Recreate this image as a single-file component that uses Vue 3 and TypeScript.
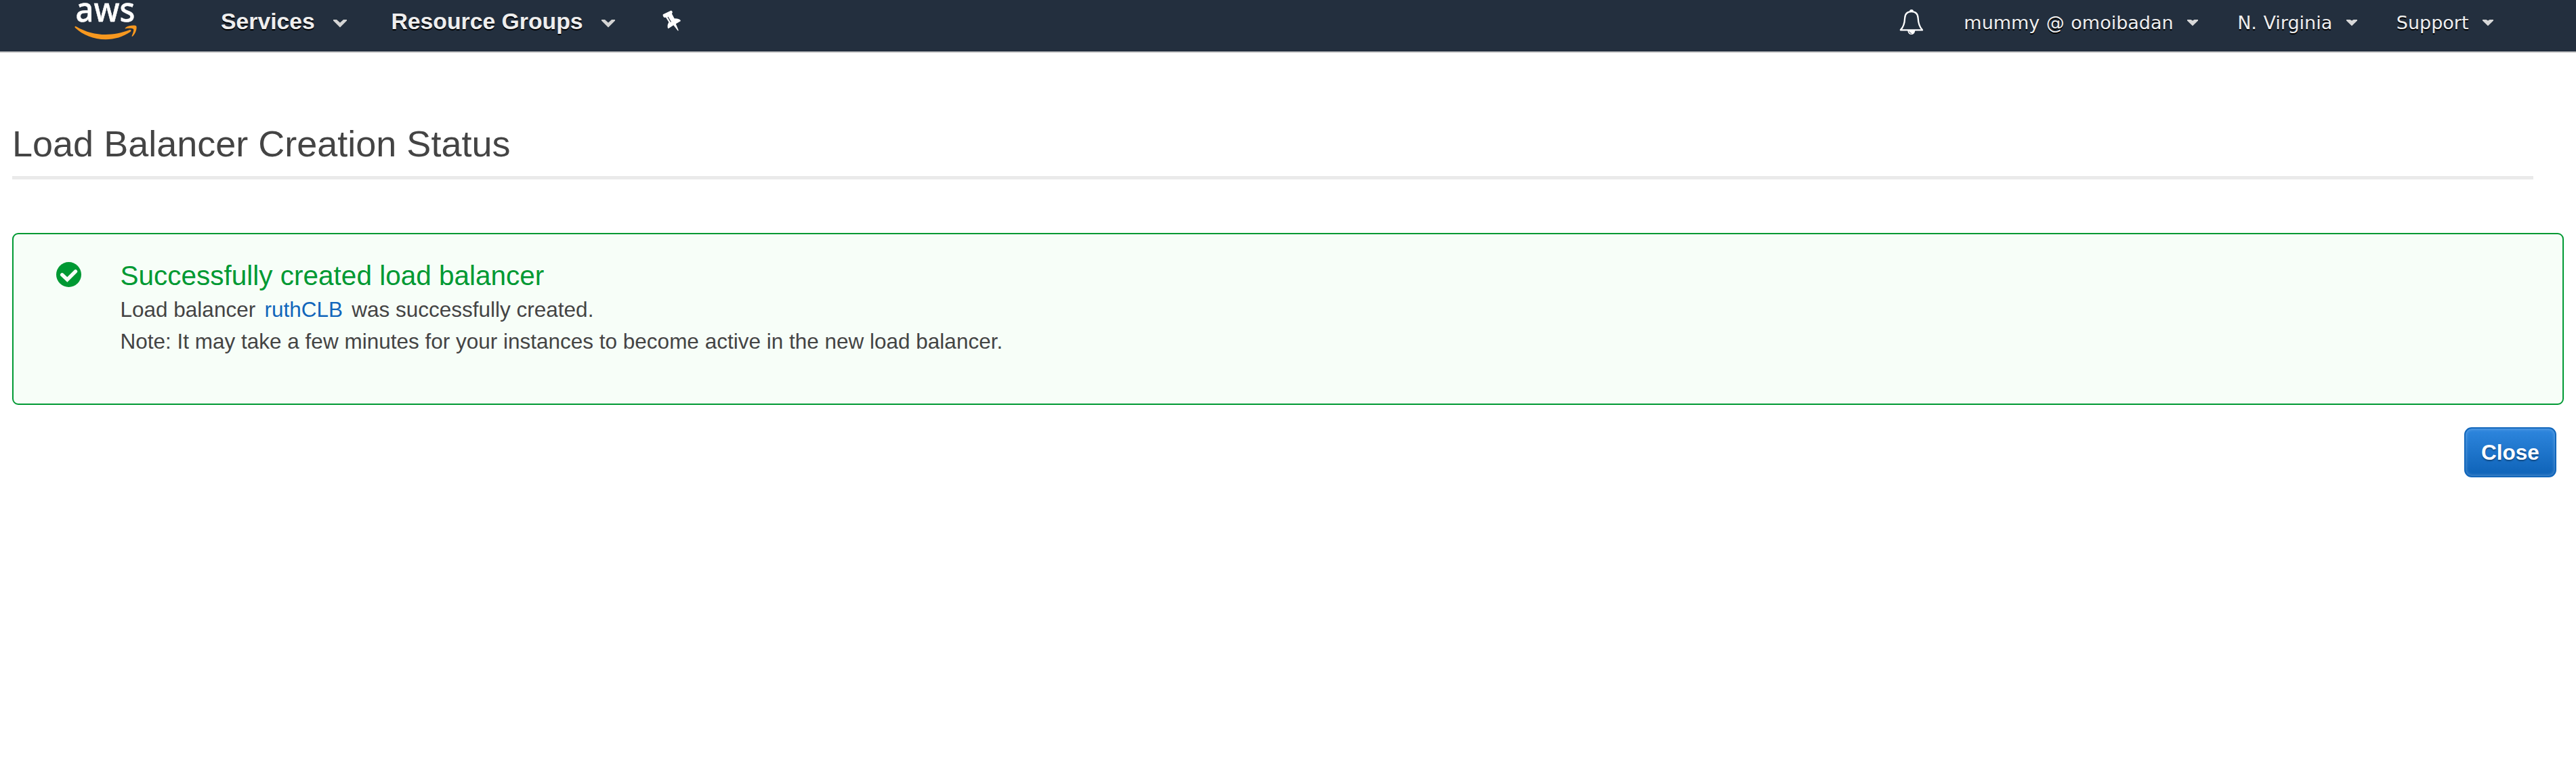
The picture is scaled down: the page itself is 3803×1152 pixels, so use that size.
<script setup lang="ts">
interface MenuItem {
  label: string
  key: string
}

const services: MenuItem[] = [
  { label: 'Services', key: 'services' },
  { label: 'Resource Groups', key: 'groups' },
]

const account: MenuItem[] = [
  { label: 'mummy @ omoibadan', key: 'user' },
  { label: 'N. Virginia', key: 'region' },
  { label: 'Support', key: 'support' },
]

const balancer = 'ruthCLB'
</script>

<template>
  <div class="page">
    <header class="nav">
      <svg class="logo" width="94" height="64" viewBox="0 0 94 64" aria-label="aws">
        <text x="1.5" y="31.6" textLength="88" lengthAdjust="spacingAndGlyphs">aws</text>
        <path
          d="M0.500 39.500Q1 38.300 2.600 39.200C17 47.500 31 51 46 51C58 51 70 48.500 81 44.300C83.600 43.300 84.500 45.600 82.500 47.100C72 54.500 59 58.300 46 58.300C28 58.300 12 51.500 1 41Q0.200 40.200 0.500 39.500Z"
          fill="#f7981f"
        />
        <path
          d="M75.500 42.200C74.500 42.500 74.300 41.700 75.200 40.900C79.500 37.500 90 36.700 91.300 38.700C92.500 41 90.500 49.500 86 53.500C85 54.400 84.200 53.900 84.700 52.800C86 49.700 88 44.500 87 43C85.800 41.400 79.500 41.700 75.500 42.200Z"
          fill="#f7981f"
        />
      </svg>

      <nav class="left">
        <a v-for="item in services" :key="item.key" :class="['main', item.key]">
          <span>{{ item.label }}</span>
          <svg width="20" height="12" viewBox="0 0 20 12">
            <path d="M0 0H5L10 4.500L15 0H20V1.500L10 11.500L0 1.500Z" fill="#d4d4d4" />
          </svg>
        </a>
        <svg class="pin" width="28" height="32" viewBox="0 0 28 32">
          <path
            d="M0.800 6.200L12.800 0.400Q14.800 0.800 14.800 3.500L13.900 5.200L17.600 12.300Q26 12.200 27 16L19.800 20.200L23.800 30L22.800 30.600L16.300 22.300L8.600 27.300Q6 24 9.300 17.700L5 10.700L2.800 10.900Q0 9 0.800 6.200Z"
            fill="#fff"
          />
          <path d="M8 10L12.500 17.500" stroke="#232f3e" stroke-width="1.200" fill="none" />
        </svg>
      </nav>

      <nav class="right">
        <svg class="bell" width="36" height="40" viewBox="0 0 36 40">
          <path d="M15 4a3 3 0 0 1 6 0z" fill="#fff" />
          <path
            d="M1.800 31.300C6.500 26.500 7.800 22 8.100 14C8.400 7.500 12 4.200 18 4.200S27.400 7.500 27.700 14C28 22 29.500 26.500 34 31.300Z"
            fill="none"
            stroke="#fff"
            stroke-width="2.300"
            stroke-linejoin="round"
          />
          <path d="M12.200 32H23.400Q22.500 38 17.800 38T12.200 32Z" fill="#fff" />
          <path d="M14.500 33.500Q15 36 18 36.500" fill="none" stroke="#232f3e" stroke-width="0.900" />
        </svg>
        <a v-for="item in account" :key="item.key" :class="['sub', item.key]">
          <span>{{ item.label }}</span>
          <svg width="16" height="10" viewBox="0 0 16 10">
            <path d="M0 0H5.500L8 1.500L10.500 0H16V1.500L8 9.200L0 1.500Z" fill="#d8d8d8" />
          </svg>
        </a>
      </nav>
    </header>

    <main>
      <h1>Load Balancer Creation Status</h1>

      <section class="alert">
        <svg class="check" width="38" height="38" viewBox="0 0 38 38">
          <circle cx="18.500" cy="18.500" r="18.500" fill="#093" />
          <path
            d="M8.700 18.800L16.300 26L28.500 13.800"
            fill="none"
            stroke="#f7fef8"
            stroke-width="5.400"
            stroke-linejoin="miter"
            stroke-linecap="round"
          />
        </svg>
        <div>
          <h2>Successfully created load balancer</h2>
          <p>Load balancer <a class="link">{{ balancer }}</a> was successfully created.</p>
          <p>Note: It may take a few minutes for your instances to become active in the new load balancer.</p>
        </div>
      </section>

      <div class="actions">
        <button type="button">Close</button>
      </div>
    </main>
  </div>
</template>

<style>
body {
  margin: 0;
  background: #fff;
}
</style>

<style scoped>
.page {
  min-height: 1152px;
  background: #fff;
  color: #444;
  font-family: "Liberation Sans", Arial, sans-serif;
}

.nav {
  box-sizing: border-box;
  height: 78px;
  display: flex;
  align-items: flex-start;
  background: #232f3e;
  border-bottom: 2px solid #ccc;
}

svg {
  display: block;
  flex: none;
}

.logo {
  margin-left: 110px;
}

.logo text {
  font-family: "Noto Sans", sans-serif;
  font-size: 51px;
  font-weight: 500;
  fill: #fff;
  stroke: #fff;
  stroke-width: 0.5px;
}

.left,
.right {
  display: flex;
  align-items: flex-start;
}

.left {
  margin-left: 122px;
}

.main,
.sub {
  display: flex;
  white-space: nowrap;
  color: #eee;
  text-shadow: 0 2px 0 #000;
}

.main {
  font-size: 33.75px;
  line-height: 40px;
  font-weight: 700;
  padding-top: 11px;
}

.main svg {
  margin: 18px 0 0 27.5px;
}

.main.groups {
  margin-left: 65px;
}

.pin {
  margin: 15px 0 0 70px;
}

.right {
  margin-left: auto;
  padding-right: 122px;
}

.bell {
  margin: 13px 59px 0 0;
}

.sub {
  font-family: "DejaVu Sans", Verdana, sans-serif;
  font-size: 27px;
  line-height: 32px;
  padding-top: 18px;
  word-spacing: 0.034em;
}

.sub svg {
  margin: 11px 0 0 20.5px;
}

.sub + .sub {
  margin-left: 58px;
}

main {
  padding: 0 18px;
}

h1 {
  margin: 0 45px 0 0;
  padding: 104px 0 17px;
  border-bottom: 5px solid #eaeaea;
  font-size: 54px;
  line-height: 61px;
  font-weight: 400;
}

.alert {
  box-sizing: border-box;
  height: 254px;
  margin-top: 79px;
  display: flex;
  align-items: flex-start;
  border: 2px solid #093;
  border-radius: 9px;
  background: #f7fef8;
}

.check {
  margin: 41px 56.5px 0 63px;
}

h2 {
  margin: 0;
  padding-top: 36px;
  font-size: 40.5px;
  line-height: 51.5px;
  font-weight: 400;
  color: #093;
}

p {
  margin: 0;
  font-size: 31.5px;
  line-height: 47.25px;
  white-space: nowrap;
}

.link {
  color: #1166bb;
  margin: 0 4.5px;
}

.actions {
  display: flex;
  justify-content: flex-end;
  padding: 33px 11px 0 0;
}

button {
  box-sizing: border-box;
  width: 136px;
  height: 74px;
  padding: 0;
  border: 2px solid #1166bb;
  border-radius: 11px;
  background: linear-gradient(#2e86de, #1166bb 90%);
  box-shadow: inset 0 0 4px 1px rgba(255, 255, 255, 0.25);
  color: #fff;
  font: 700 31.5px/40px "Liberation Sans", Arial, sans-serif;
  text-shadow: 0 2px 2px rgba(0, 0, 0, 0.35);
}
</style>
